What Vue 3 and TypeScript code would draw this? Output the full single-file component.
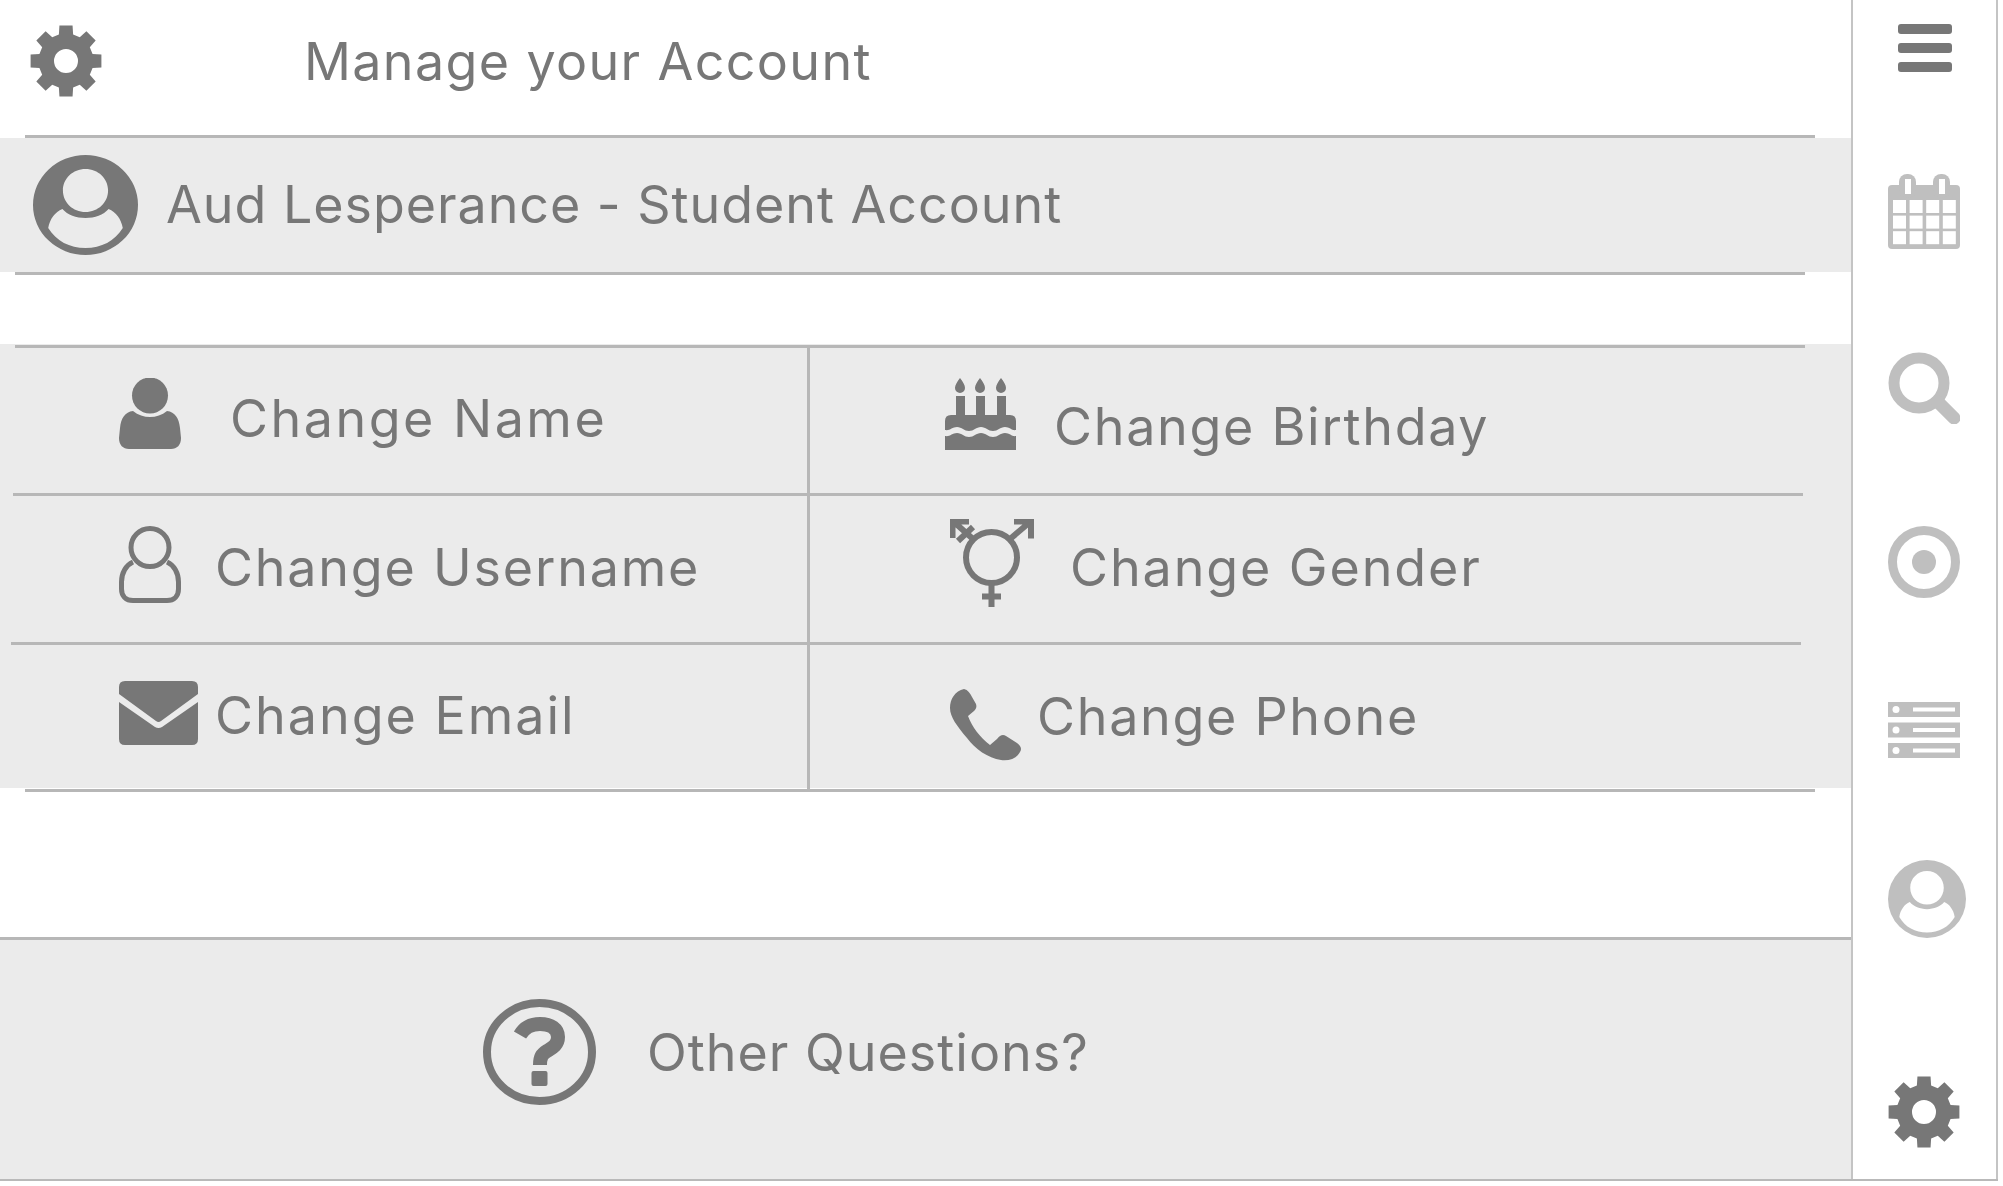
<script setup lang="ts">
import { computed } from 'vue';

const toRad = (deg: number) => (deg * Math.PI) / 180;

const gearPath = computed(() => {
  const point = (r: number, deg: number) =>
    `${(36 + r * Math.cos(toRad(deg))).toFixed(2)} ${(36 + r * Math.sin(toRad(deg))).toFixed(2)}`;
  const parts: string[] = [];
  for (let i = 0; i < 8; i++) {
    const a = i * 45 - 90;
    parts.push(
      `${i === 0 ? 'M' : 'L'}${point(27.5, a - 15)}`,
      `L${point(36, a - 10.5)}`,
      `L${point(36, a + 10.5)}`,
      `L${point(27.5, a + 15)}`,
    );
  }
  return `${parts.join(' ')}Z M48 36a12 12 0 1 0 -24 0a12 12 0 1 0 24 0Z`;
});

const userCircle =
  'M50 0a50 50 0 1 0 0 100a50 50 0 1 0 0-100Z M50 14c12 0 21.500 9.500 21.500 21.500S62 57 50 57s-21.500-9.500-21.500-21.500S38 14 50 14Z M14.500 73C16 64 21 57 28 54C33 60 41 63 50 63C59 63 67 60 72 54C79 57 84 64 85.500 73C78 86 65 93 50 93C35 93 22 86 14.500 73Z';

const calendarCells = computed(() => {
  const cells: { x: number; y: number }[] = [];
  for (let row = 0; row < 3; row++) {
    for (let col = 0; col < 4; col++) {
      cells.push({ x: 5 + col * 16.6, y: 26 + row * 15.6 });
    }
  }
  return cells;
});

const listBars = [0, 20.5, 41];
</script>

<template>
  <div class="app">
    <main class="main">
      <header class="header">
        <svg class="icon gear-top" viewBox="0 0 72 72"><path class="dark" fill-rule="evenodd" :d="gearPath" /></svg>
        <h1 class="title">Manage your Account</h1>
      </header>
      <div class="rule rule-header"></div>

      <section class="account">
        <svg class="icon account-icon" viewBox="0 0 100 100" preserveAspectRatio="none">
          <path class="dark" fill-rule="evenodd" :d="userCircle" />
        </svg>
        <span class="label account-label">Aud Lesperance - Student Account</span>
      </section>
      <div class="rule rule-account"></div>

      <section class="options">
        <div class="rule rule-top"></div>
        <div class="row">
          <div class="cell">
            <svg class="icon person" viewBox="0 0 62 72">
              <circle class="dark" cx="31" cy="17.500" r="18" />
              <path class="dark" d="M14 33C19 37 25 39 31 39C37 39 43 37 48 33C56 34 60 40 61 50L62 60C62 67 58 71 52 71H10C4 71 0 67 0 60L1 50C2 40 6 34 14 33Z" />
            </svg>
            <span class="label name-label">Change Name</span>
          </div>
          <div class="cell cell-right">
            <svg class="icon cake" viewBox="0 0 71 72">
              <path class="dark" d="M10 0c3 4 5 7 5 10a5 5 0 0 1-10 0c0-3 2-6 5-10Zm20 0c3 4 5 7 5 10a5 5 0 0 1-10 0c0-3 2-6 5-10Zm21 0c3 4 5 7 5 10a5 5 0 0 1-10 0c0-3 2-6 5-10Z" transform="translate(5 0)" />
              <path class="dark" d="M11 18h9v19h-9Zm20 0h9v19h-9Zm21 0h9v19h-9Z" />
              <path class="dark" d="M0 43q0-6 6-6h59q6 0 6 6v9c-4 1-6-3-11-3s-7 4-12 4s-7-4-12-4s-7 4-12 4s-7-4-12-4s-7 4-12 3Z" />
              <path class="dark" d="M0 58c5 1 7-3 12-3s7 4 12 4s7-4 12-4s7 4 12 4s7-4 12-4s7 4 11 3v14H0Z" />
            </svg>
            <span class="label birthday-label">Change Birthday</span>
          </div>
        </div>
        <div class="rule rule-row1"></div>
        <div class="row row-mid">
          <div class="cell">
            <svg class="icon username" viewBox="0 0 62 77">
              <circle class="outline" cx="31" cy="21.500" r="19" />
              <path class="outline" d="M14 36C7 39 2.500 47 2.500 56V63C2.500 70 7 74.500 14 74.500H48C55 74.500 59.500 70 59.500 63V56C59.500 47 55 39 48 36" />
            </svg>
            <span class="label username-label">Change Username</span>
          </div>
          <div class="cell cell-right">
            <svg class="icon gender" viewBox="0 0 84 88">
              <circle class="outline thick" cx="41.500" cy="38.500" r="25.500" />
              <path class="outline thick" d="M41.500 64v24M32 77.500h19M60 20L80 3M64 2.500h17v17M23 20L4 3M2.500 19V2.500H19M8 22L23 8" />
            </svg>
            <span class="label gender-label">Change Gender</span>
          </div>
        </div>
        <div class="rule rule-row2"></div>
        <div class="row row-last">
          <div class="cell">
            <svg class="icon mail" viewBox="0 0 79 64">
              <path class="dark" d="M0 6q0-6 6-6h67q6 0 6 6v7L42 40q-2.500 2-5 0L0 13Z" />
              <path class="dark" d="M0 21l36 25q3.500 2 7 0l36-25v37q0 6-6 6H6q-6 0-6-6Z" />
            </svg>
            <span class="label email-label">Change Email</span>
          </div>
          <div class="cell cell-right">
            <svg class="icon phone" viewBox="0 0 72 72">
              <path class="dark" d="M14 0C18 1 20 4 22 8L26 15C27 18 26 20 24 22L18 27C22 38 30 48 40 56L47 50C50 46 53 45 56 47L67 54C71 57 72 60 70 63C67 69 60 72 51 71C38 69 25 60 17 49C7 37 0 28 0 19C0 10 5 2 14 0Z" />
            </svg>
            <span class="label phone-label">Change Phone</span>
          </div>
        </div>
      </section>
      <div class="rule rule-bottom"></div>

      <footer class="footer">
        <svg class="icon help" viewBox="0 0 113 106">
          <ellipse class="outline ring" cx="56.500" cy="53" rx="52.500" ry="49" />
          <path class="outline qmark" d="M37 36C41 29 48 25 57 25C68 25 75 30 75 38C75 46 69 49 64 52C59 55 57 58 57 66" />
          <rect class="dark" x="48.500" y="72" width="16" height="15" rx="2" />
        </svg>
        <span class="label other-label">Other Questions?</span>
      </footer>
    </main>

    <aside class="sidebar">
      <svg class="icon side-menu" viewBox="0 0 54 48">
        <rect class="dark" width="54" height="10" rx="3" />
        <rect class="dark" y="19" width="54" height="10" rx="3" />
        <rect class="dark" y="38" width="54" height="10" rx="3" />
      </svg>
      <svg class="icon side-calendar" viewBox="0 0 72 75">
        <rect class="light" y="11" width="72" height="64" rx="4" />
        <rect class="light" x="11" width="17" height="24" rx="8" />
        <rect class="light" x="45" width="17" height="24" rx="8" />
        <rect class="blank" x="17" y="5" width="6" height="15" />
        <rect class="blank" x="51" y="5" width="6" height="15" />
        <rect v-for="(cell, i) in calendarCells" :key="i" class="blank" :x="cell.x" :y="cell.y" width="13" height="13" />
      </svg>
      <svg class="icon side-search" viewBox="0 0 72 72">
        <circle class="light-line" cx="31" cy="31" r="25" stroke-width="11" />
        <path class="light-line" d="M50 50L66 66" stroke-width="13" stroke-linecap="round" />
      </svg>
      <svg class="icon side-target" viewBox="0 0 72 72">
        <circle class="light-line" cx="36" cy="36" r="31.500" stroke-width="9" />
        <circle class="light" cx="36" cy="36" r="12" />
      </svg>
      <svg class="icon side-list" viewBox="0 0 72 56">
        <g v-for="y in listBars" :key="y">
          <rect class="light" :y="y" width="72" height="15" />
          <circle class="blank" cx="8" :cy="y + 7.5" r="3.500" />
          <rect class="blank" x="25" :y="y + 5.500" width="42" height="4" />
        </g>
      </svg>
      <svg class="icon side-user" viewBox="0 0 100 100">
        <path class="light" fill-rule="evenodd" :d="userCircle" />
      </svg>
      <svg class="icon side-gear" viewBox="0 0 72 72"><path class="dark" fill-rule="evenodd" :d="gearPath" /></svg>
    </aside>
  </div>
</template>

<style>
html,
body {
  margin: 0;
  background: #fff;
}
</style>

<style scoped>
.app {
  display: flex;
  width: 1998px;
  height: 1181px;
  box-sizing: border-box;
  border-bottom: 2px solid #b9b9b9;
  font-family: Inter, "Open Sans", sans-serif;
  color: #777;
}

.main {
  display: flex;
  flex-direction: column;
  width: 1851px;
  flex-shrink: 0;
}

.icon {
  display: block;
  flex-shrink: 0;
}

.dark {
  fill: #777;
}

.light {
  fill: #bfbfbf;
}

.blank {
  fill: #fff;
}

.outline {
  fill: none;
  stroke: #777;
  stroke-width: 5;
}

.outline.thick {
  stroke-width: 6;
}

.outline.ring {
  stroke-width: 8;
}

.outline.qmark {
  stroke-width: 14;
}

.light-line {
  fill: none;
  stroke: #bfbfbf;
}

.label,
.title {
  font-size: 52px;
  font-weight: 400;
  line-height: 60px;
  letter-spacing: 1.35px;
  white-space: nowrap;
}

/* rules sit slightly off from each other, same as the source mockup */
.rule {
  width: 1790px;
  height: 3px;
  flex-shrink: 0;
  background: #b7b7b7;
}

.rule-header {
  margin-left: 25px;
}

.rule-account {
  margin-left: 15px;
}

.rule-top {
  margin-left: 15px;
}

.rule-row1 {
  margin-left: 13px;
}

.rule-row2 {
  margin-left: 11px;
}

.rule-bottom {
  margin: 1px 0 0 25px;
}

.header {
  display: flex;
  align-items: center;
  height: 135px;
  padding-left: 30px;
  box-sizing: border-box;
}

.gear-top {
  width: 72px;
  height: 72px;
  margin-top: -13px;
}

.title {
  margin: -11px 0 0 202px;
}

.account {
  display: flex;
  align-items: center;
  height: 134px;
  padding-left: 33px;
  box-sizing: border-box;
  background: #ebebeb;
}

.account-icon {
  width: 105px;
  height: 100px;
}

.account-label {
  margin-left: 28px;
  letter-spacing: 0.95px;
}

.options {
  margin-top: 69px;
  padding-top: 1px;
  height: 444px;
  box-sizing: border-box;
  background: #ebebeb;
}

.row {
  display: flex;
  height: 145px;
}

.row-mid {
  height: 146px;
}

.row-last {
  height: 143px;
}

.cell {
  display: flex;
  align-items: center;
  width: 807px;
  height: 100%;
  padding-left: 119px;
  box-sizing: border-box;
}

.cell-right {
  flex: 1;
  padding-left: 135px;
  border-left: 3px solid #b7b7b7;
}

.row-last .cell {
  height: 146px;
}

.person {
  width: 62px;
  height: 72px;
  margin-top: -14px;
}

.name-label {
  margin: -3px 0 0 49px;
  letter-spacing: 2.5px;
}

.cake {
  width: 71px;
  height: 72px;
  margin-top: -14px;
}

.birthday-label {
  margin: 12px 0 0 38px;
  letter-spacing: 1.7px;
}

.username {
  width: 62px;
  height: 77px;
  margin-top: -9px;
}

.username-label {
  margin: -3px 0 0 34px;
  letter-spacing: 1.8px;
}

.gender {
  width: 84px;
  height: 88px;
  margin: -12px 0 0 5px;
}

.gender-label {
  margin: -3px 0 0 36px;
  letter-spacing: 1.9px;
}

.mail {
  width: 79px;
  height: 64px;
  margin-top: -10px;
}

.email-label {
  margin: -5px 0 0 17px;
  letter-spacing: 2px;
}

.phone {
  width: 72px;
  height: 72px;
  margin: 14px 0 0 5px;
}

.phone-label {
  margin: -3px 0 0 15px;
  letter-spacing: 1.7px;
}

.footer {
  display: flex;
  flex: 1;
  align-items: center;
  padding-left: 483px;
  border-top: 3px solid #b7b7b7;
  margin-top: 145px;
  background: #ebebeb;
}

.help {
  width: 113px;
  height: 106px;
  margin-top: -16px;
}

.other-label {
  margin: -14px 0 0 51px;
  letter-spacing: 1px;
}

.sidebar {
  display: flex;
  flex-direction: column;
  width: 147px;
  box-sizing: border-box;
  padding-left: 35px;
  border-left: 2px solid #c4c4c4;
  border-right: 2px solid #c4c4c4;
}

.side-menu {
  width: 54px;
  height: 48px;
  margin: 24px 0 0 10px;
}

.side-calendar {
  width: 72px;
  height: 75px;
  margin-top: 102px;
}

.side-search {
  width: 72px;
  height: 72px;
  margin-top: 103px;
}

.side-target {
  width: 72px;
  height: 72px;
  margin-top: 102px;
}

.side-list {
  width: 72px;
  height: 56px;
  margin-top: 104px;
}

.side-user {
  width: 78px;
  height: 78px;
  margin-top: 102px;
}

.side-gear {
  width: 72px;
  height: 72px;
  margin-top: 138px;
}
</style>
